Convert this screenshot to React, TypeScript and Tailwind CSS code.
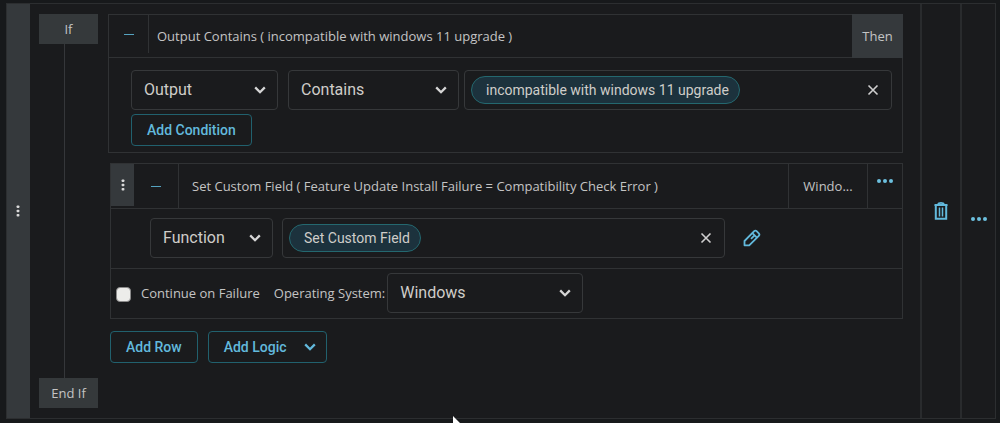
import type { ReactNode } from "react";

const sans = "font-['Open_Sans','Noto_Sans',sans-serif]";

function Chevron({ className }: { className: string }) {
  return (
    <svg viewBox="0 0 12 8" aria-hidden="true" className={className}>
      <path d="M1.2 1.4 6 6.2l4.8-4.8" fill="none" stroke="currentColor" strokeWidth="2.3" />
    </svg>
  );
}

function Select({ label, id, options, className }: { label?: string; id: string; options: string[]; className: string }) {
  return (
    <div className={`relative h-10 ${className}`}>
      <select
        id={id}
        aria-label={label}
        className="h-full w-full appearance-none rounded border border-[#36383a] bg-transparent pr-8 pl-3 text-base text-[#cfcdc9] outline-none"
      >
        {options.map((o) => (
          <option key={o}>{o}</option>
        ))}
      </select>
      <Chevron className="pointer-events-none absolute top-4 right-3 h-2 w-3 text-[#d6d6d6]" />
    </div>
  );
}

function TokenField({ token, label, className }: { token: string; label: string; className: string }) {
  return (
    <div className={`flex h-10 items-center justify-between rounded border border-[#36383a] pr-3 pl-1.5 ${className}`}>
      <span className="flex h-7 items-center rounded-full border border-[#24686f] bg-[#1c323d] pr-2.5 pl-3.5 text-sm text-[#cfcdc9]">
        {token}
      </span>
      <button type="button" aria-label={label} className="text-[#cfcfcf]">
        <svg viewBox="0 0 12 12" className="size-3">
          <path d="M1.5 1.5l9 9M10.5 1.5l-9 9" fill="none" stroke="currentColor" strokeWidth="1.6" />
        </svg>
      </button>
    </div>
  );
}

function OutlineButton({ children, className }: { children: ReactNode; className: string }) {
  return (
    <button
      type="button"
      className={`flex h-8 items-center rounded border border-[#21616e] text-sm font-medium text-[#62b9dc] ${className}`}
    >
      {children}
    </button>
  );
}

function DotsIcon({ vertical = false }: { vertical?: boolean }) {
  return vertical ? (
    <svg viewBox="0 0 4 12" className="h-3 w-1" fill="currentColor">
      <rect x="0.6" y="0.4" width="2.8" height="2.6" rx="0.8" />
      <rect x="0.6" y="4.7" width="2.8" height="2.6" rx="0.8" />
      <rect x="0.6" y="9" width="2.8" height="2.6" rx="0.8" />
    </svg>
  ) : (
    <svg viewBox="0 0 16 4" className="h-1 w-4" fill="currentColor">
      <circle cx="2" cy="2" r="2" />
      <circle cx="8" cy="2" r="2" />
      <circle cx="14" cy="2" r="2" />
    </svg>
  );
}

function MinusButton({ className }: { className: string }) {
  return (
    <button type="button" aria-label="Collapse" className={`flex items-center justify-center border-r border-[#303234] ${className}`}>
      <span className="h-px w-2.5 bg-[#55a3c0]" />
    </button>
  );
}

function TrashIcon() {
  return (
    <svg viewBox="0 0 14 18" className="h-[18px] w-3.5" fill="none" stroke="currentColor">
      <path d="M0.5 3h13" strokeWidth="2" />
      <path d="M4.2 2.2C4.4 1 5 .9 7 .9s2.6.1 2.8 1.3" strokeWidth="1.6" />
      <path d="M1.8 3v13.8h10.4V3" strokeWidth="2" />
      <path d="M5.5 5.5v9M8.5 5.5v9" strokeWidth="1.5" />
    </svg>
  );
}

function PencilIcon() {
  return (
    <svg viewBox="0 0 18 18" className="size-[18px]" fill="none" stroke="currentColor" strokeWidth="1.8" strokeLinejoin="round">
      <path d="M1.5 16.300v-4.300L11.200 2.200Q12.400 1 13.600 2.200l2.200 2.200Q17 5.600 15.800 6.800L6.200 16.300z" />
      <path d="M9.400 4.100l4.500 4.500M11.500 6.300L8 9.800" />
    </svg>
  );
}

export default function App() {
  return (
    <main className="relative min-h-screen overflow-hidden bg-[#17191b] pt-[3px] pr-1 pb-1 pl-1.5 font-[Roboto,sans-serif] text-[#c4c4c4]">
      <section className="flex border border-[#2c2e30] bg-[#1a1b1d]">
        <button type="button" aria-label="Drag logic block" className="flex w-[23px] shrink-0 items-center justify-center bg-[#35393c] pr-0.5 text-[#dadada]">
          <DotsIcon vertical />
        </button>

        <div className={`flex w-[78px] shrink-0 flex-col items-center py-2.5 pr-2.5 pl-[9px] text-[13px] ${sans}`}>
          <div className="flex h-[30px] w-full items-center justify-center bg-[#35393b] pt-0.5">If</div>
          <div className="mr-2 w-px grow bg-[#35373a]" />
          <div className="flex h-[30px] w-full items-center justify-center bg-[#35393b] pt-0.5">End If</div>
        </div>

        <div className="flex min-w-0 grow flex-col pt-2.5 pr-[17px] pb-[55px]">
          <div className="border border-[#303234] pb-1.5">
            <header className={`flex h-[43px] items-stretch border-b border-[#303234] text-[13px] ${sans}`}>
              <MinusButton className="mb-1 w-10" />
              <h2 className="flex min-w-0 grow items-center truncate pt-0.5 pl-2">Output Contains ( incompatible with windows 11 upgrade )</h2>
              <div className="-my-px -mr-px flex w-[51px] items-center justify-center bg-[#35393c] pt-0.5">Then</div>
            </header>
            <div className="flex pt-3 pr-2.5 pl-[22px]">
              <Select id="source" label="Condition source" options={["Output"]} className="w-[147px]" />
              <Select id="operator" label="Condition operator" options={["Contains"]} className="ml-2.5 w-[171px]" />
              <TokenField token="incompatible with windows 11 upgrade" label="Clear condition value" className="ml-[5px] grow" />
            </div>
            <OutlineButton className="mt-1 ml-[22px] px-[15px]">Add Condition</OutlineButton>
          </div>

          <div className="mt-2.5 ml-0.5 border border-[#303234]">
            <header className={`flex h-[45px] items-stretch border-b border-[#303234] text-[13px] ${sans}`}>
              <button type="button" aria-label="Drag row" className="mb-0.5 flex w-[23px] items-center justify-center bg-[#35393c] text-[#dadada]">
                <DotsIcon vertical />
              </button>
              <MinusButton className="w-[45px]" />
              <h2 className="flex min-w-0 grow items-center pt-0.5 pl-[13px]">
                Set Custom Field ( Feature Update Install Failure = Compatibility Check Error )
              </h2>
              <div className="flex w-20 items-center justify-center border-x border-[#303234] pt-0.5">Windo...</div>
              <button type="button" aria-label="Row options" className="flex w-[34px] justify-center pt-[15px] text-[#6cc0de]">
                <DotsIcon />
              </button>
            </header>
            <div className="flex items-center border-b border-[#303234] pt-[9px] pb-2.5 pl-[39px]">
              <Select id="kind" label="Row type" options={["Function"]} className="w-[123px]" />
              <TokenField token="Set Custom Field" label="Clear function" className="mr-[18px] ml-[9px] grow" />
              <button type="button" aria-label="Edit function" className="mr-[141px] text-[#62b9dc]">
                <PencilIcon />
              </button>
            </div>
            <div className={`flex items-center pt-1 pb-[5px] pl-[5px] text-[13px] ${sans}`}>
              <input id="continue" type="checkbox" className="mt-0.5 size-[15px] appearance-none rounded-sm border border-[#8b8b8b] bg-[#ececea] checked:bg-[#62b9dc]" />
              <label htmlFor="continue" className="ml-2.5 pt-0.5">Continue on Failure</label>
              <label htmlFor="os" className="ml-3.5 pt-0.5">Operating System:</label>
              <Select id="os" options={["Windows"]} className="ml-0.5 w-[196px] font-[Roboto,sans-serif]" />
            </div>
          </div>

          <div className="mt-3 ml-0.5 flex gap-2.5">
            <OutlineButton className="px-[15px]">Add Row</OutlineButton>
            <OutlineButton className="gap-[17px] pr-2.5 pl-[15px]">
              Add Logic
              <Chevron className="h-2 w-3" />
            </OutlineButton>
          </div>
        </div>

        <div className="flex w-10 shrink-0 items-center justify-center border-l-2 border-[#292b2d]">
          <button type="button" aria-label="Delete logic block" className="text-[#62b9dc]">
            <TrashIcon />
          </button>
        </div>
        <div className="flex w-[35px] shrink-0 items-center justify-center border-l-2 border-[#292b2d] pt-4">
          <button type="button" aria-label="Logic block options" className="text-[#6cc0de]">
            <DotsIcon />
          </button>
        </div>
      </section>

      <svg viewBox="0 0 12 18" aria-hidden="true" className="absolute top-[416px] left-[453px] h-[18px] w-3">
        <path d="M0 0v16l4-3.500 2.500 5 2-1-2.500-5h5.500z" fill="#fff" />
      </svg>
    </main>
  );
}
